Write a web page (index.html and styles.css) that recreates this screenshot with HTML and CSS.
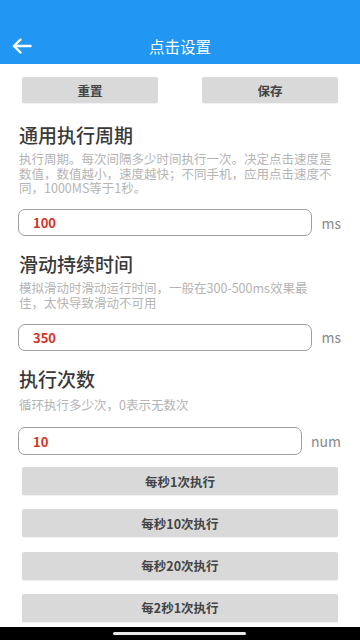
FILE: index.html
```html
<!DOCTYPE html>
<html lang="zh-CN">
<head>
<meta charset="utf-8">
<meta name="viewport" content="width=device-width, initial-scale=1">
<title>点击设置</title>
<link rel="stylesheet" href="styles.css">
</head>
<body>
<header class="appbar">
  <div class="toolbar">
    <button class="back" aria-label="返回">
      <svg width="20" height="16" viewBox="0 0 20 16" fill="none" stroke="#fff" stroke-width="2.4" stroke-linecap="round" stroke-linejoin="round">
        <path d="M18.5 8H2"/>
        <path d="M8.5 1.5L2 8l6.5 6.5"/>
      </svg>
    </button>
    <h1 class="title">点击设置</h1>
  </div>
</header>

<main class="content">
  <div class="top-actions">
    <button class="btn">重置</button>
    <button class="btn">保存</button>
  </div>

  <section class="setting">
    <h2 class="setting-title">通用执行周期</h2>
    <p class="setting-desc">执行周期。每次间隔多少时间执行一次。决定点击速度是数值，数值越小，速度越快；不同手机，应用点击速度不同，1000MS等于1秒。</p>
    <div class="field">
      <input class="field-input" type="text" value="100">
      <span class="unit">ms</span>
    </div>
  </section>

  <section class="setting">
    <h2 class="setting-title">滑动持续时间</h2>
    <p class="setting-desc setting-desc-narrow">模拟滑动时滑动运行时间，一般在300-500ms效果最佳，太快导致滑动不可用</p>
    <div class="field">
      <input class="field-input" type="text" value="350">
      <span class="unit">ms</span>
    </div>
  </section>

  <section class="setting setting-count">
    <h2 class="setting-title">执行次数</h2>
    <p class="setting-desc">循环执行多少次，0表示无数次</p>
    <div class="field">
      <input class="field-input" type="text" value="10">
      <span class="unit">num</span>
    </div>
  </section>

  <div class="presets">
    <button class="btn btn-wide">每秒1次执行</button>
    <button class="btn btn-wide">每秒10次执行</button>
    <button class="btn btn-wide">每秒20次执行</button>
    <button class="btn btn-wide">每2秒1次执行</button>
  </div>
</main>

<div class="navbar"><span class="pill"></span></div>
</body>
</html>
```

FILE: styles.css
```css
* {
  box-sizing: border-box;
}

html, body {
  margin: 0;
  padding: 0;
  background: #ffffff;
}

body {
  width: 360px;
  height: 640px;
  overflow: hidden;
  position: relative;
  font-family: "Noto Sans CJK SC", "Noto Sans", Roboto, sans-serif;
  color: #333333;
}

.appbar {
  background: #2196f3;
  padding-top: 28px;
  height: 64px;
}

.toolbar {
  height: 36px;
  position: relative;
  display: flex;
  align-items: center;
  justify-content: center;
}

.back {
  position: absolute;
  left: 12px;
  top: 10px;
  width: 20px;
  height: 16px;
  padding: 0;
  border: 0;
  background: none;
  display: flex;
}

.title {
  margin: 0;
  font-size: 15.5px;
  font-weight: 400;
  color: #ffffff;
  line-height: 20px;
}

.content {
  display: flex;
  flex-direction: column;
}

.top-actions {
  display: grid;
  grid-template-columns: 1fr 1fr;
  column-gap: 44px;
  padding: 13px 22px 4px 22px;
}

.btn {
  height: 26px;
  border: 0;
  border-radius: 2px;
  background: #d9d9d9;
  color: #444444;
  font-family: "Noto Sans CJK SC", "Noto Sans", sans-serif;
  font-size: 12.5px;
  font-weight: 700;
  padding: 0;
  box-shadow: 0 1px 1px rgba(0, 0, 0, 0.06);
}

.setting {
  display: flex;
  flex-direction: column;
  padding: 16px 19px 0 18px;
}

.setting-title {
  margin: 0 0 0 1px;
  font-size: 19px;
  font-weight: 500;
  line-height: 24px;
  color: #3a3a3a;
}

.setting-desc {
  margin: 5px 0 0 1px;
  font-size: 12.5px;
  line-height: 14.5px;
  color: #b4b4b4;
}

.setting-desc-narrow {
  max-width: 298px;
}

.field {
  display: flex;
  align-items: center;
  gap: 9px;
  margin-top: 13.5px;
}

.setting-count .setting-desc {
  margin-top: 7px;
}

.setting-count .field {
  margin-top: 15px;
}

.setting-count .field-input {
  height: 28px;
}

.field-input {
  flex: 1;
  min-width: 0;
  height: 27px;
  border: 1.5px solid #9e9e9e;
  border-radius: 7px;
  padding: 0 0 0 14px;
  font-family: "Noto Sans CJK SC", "Noto Sans", sans-serif;
  font-size: 13px;
  font-weight: 700;
  color: #d93025;
  background: #ffffff;
  outline: none;
}

.unit {
  font-size: 14px;
  color: #8a8a8a;
  line-height: 20px;
}

.presets {
  display: flex;
  flex-direction: column;
  gap: 14.3px;
  padding: 12px 22px 0 22px;
}

.btn-wide {
  height: 28px;
}

.navbar {
  position: absolute;
  left: 0;
  right: 0;
  bottom: 0;
  height: 13px;
  background: #000000;
  display: flex;
  align-items: center;
  justify-content: center;
}

.pill {
  display: block;
  width: 133px;
  height: 3px;
  border-radius: 2px;
  background: #e8e8e8;
  margin-left: -1px;
}
```
